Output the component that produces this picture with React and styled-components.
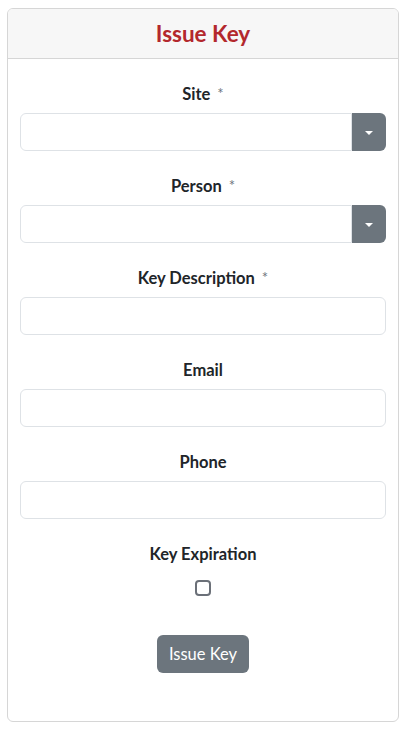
import React from "react";
import styled, { createGlobalStyle } from "styled-components";

const GlobalStyle = createGlobalStyle`
  html, body { margin: 0; padding: 0; background: #ffffff; }
  body { font-family: Lato, "Liberation Sans", sans-serif; color: #212529; }
  * { box-sizing: border-box; }
`;

const Page = styled.div`
  padding: 8px 9px 0 7px;
`;

const Card = styled.div`
  border: 1px solid #d6d6d6;
  border-radius: 6px;
  height: 714px;
  display: flex;
  flex-direction: column;
  overflow: hidden;
`;

const Header = styled.div`
  height: 50px;
  flex: none;
  background: #f7f7f7;
  border-bottom: 1px solid #d6d6d6;
  display: flex;
  align-items: center;
  justify-content: center;
`;

const Title = styled.h1`
  margin: 0;
  font-size: 22.5px;
  font-weight: 700;
  color: #b3282d;
  line-height: 1;
  padding-top: 2px;
`;

const Body = styled.form`
  padding: 22px 12px 0;
  display: flex;
  flex-direction: column;
  gap: 22px;
`;

const Group = styled.div`
  display: flex;
  flex-direction: column;
  align-items: ${(p) => (p.$center ? "center" : "stretch")};
`;

const Label = styled.label`
  display: block;
  text-align: center;
  font-size: 16.5px;
  font-weight: 700;
  line-height: 24px;
  padding-top: 1px;
  margin-bottom: 7px;
  color: #212529;
`;

const Required = styled.span`
  color: #6c757d;
  font-weight: 400;
  font-size: 15px;
  margin-left: 7px;
  position: relative;
  top: -1px;
`;

const InputGroup = styled.div`
  display: flex;
  height: 38px;
`;

const Input = styled.input`
  flex: ${(p) => (p.$joined ? "1 1 auto" : "none")};
  width: ${(p) => (p.$joined ? "auto" : "100%")};
  min-width: 0;
  height: 38px;
  border: 1px solid #dee2e6;
  border-radius: ${(p) => (p.$joined ? "6px 0 0 6px" : "6px")};
  padding: 6px 12px;
  font-size: 16px;
  font-family: inherit;
  outline: none;
  background: #fff;
`;

const CaretButton = styled.button`
  flex: none;
  width: 34px;
  height: 38px;
  border: none;
  border-radius: 0 6px 6px 0;
  background: #6c757d;
  display: flex;
  align-items: center;
  justify-content: center;
  padding: 0;
  cursor: pointer;
`;

const Caret = styled.span`
  width: 0;
  height: 0;
  border-left: 4px solid transparent;
  border-right: 4px solid transparent;
  border-top: 4px solid #ffffff;
  margin-top: 1px;
`;

const Checkbox = styled.span`
  display: block;
  width: 16px;
  height: 16px;
  border: 2px solid #6b7078;
  border-radius: 4px;
  background: #fff;
  margin-top: 7px;
`;

const ButtonRow = styled.div`
  display: flex;
  justify-content: center;
  padding-top: 17px;
`;

const SubmitButton = styled.button`
  height: 38px;
  padding: 0 12px;
  border: none;
  border-radius: 6px;
  background: #6c757d;
  color: #fff;
  font-family: inherit;
  font-size: 16.5px;
  font-weight: 400;
`;

const SelectField = ({ label, required }) => (
  <Group>
    <Label>
      {label}
      {required && <Required>*</Required>}
    </Label>
    <InputGroup>
      <Input $joined />
      <CaretButton type="button">
        <Caret />
      </CaretButton>
    </InputGroup>
  </Group>
);

const TextField = ({ label, required }) => (
  <Group>
    <Label>
      {label}
      {required && <Required>*</Required>}
    </Label>
    <Input />
  </Group>
);

export default function App() {
  return (
    <>
      <GlobalStyle />
      <Page>
        <Card>
          <Header>
            <Title>Issue Key</Title>
          </Header>
          <Body onSubmit={(e) => e.preventDefault()}>
            <SelectField label="Site" required />
            <SelectField label="Person" required />
            <TextField label="Key Description" required />
            <TextField label="Email" />
            <TextField label="Phone" />
            <Group $center>
              <Label>Key Expiration</Label>
              <Checkbox />
            </Group>
            <ButtonRow>
              <SubmitButton type="button">Issue Key</SubmitButton>
            </ButtonRow>
          </Body>
        </Card>
      </Page>
    </>
  );
}
